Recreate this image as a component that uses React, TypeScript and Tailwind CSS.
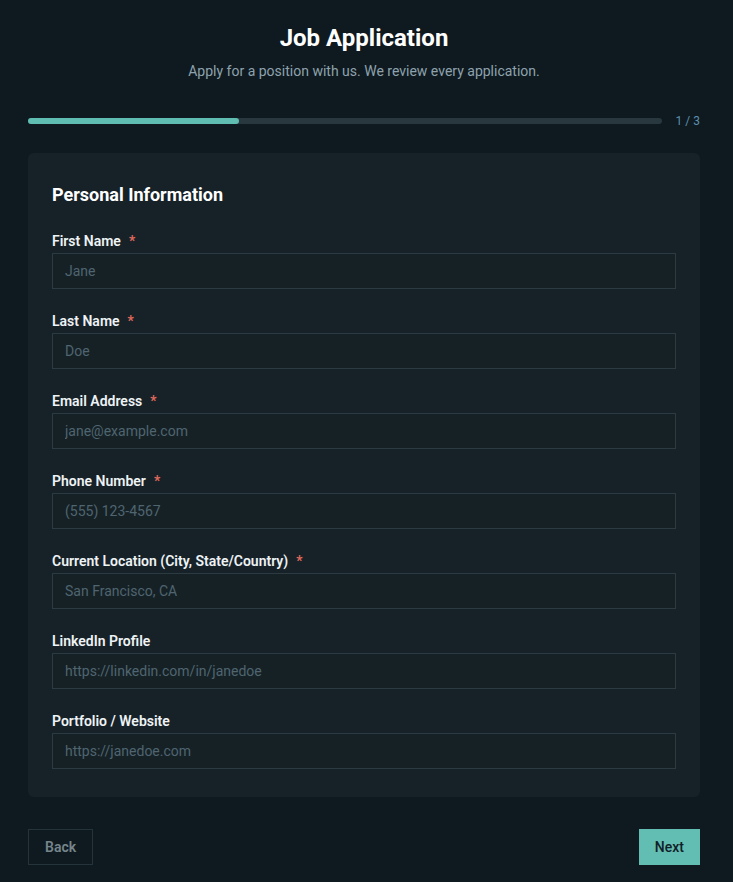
const fields = [
  { label: "First Name", placeholder: "Jane", required: true },
  { label: "Last Name", placeholder: "Doe", required: true },
  { label: "Email Address", placeholder: "jane@example.com", required: true },
  { label: "Phone Number", placeholder: "(555) 123-4567", required: true },
  {
    label: "Current Location (City, State/Country)",
    placeholder: "San Francisco, CA",
    required: true,
  },
  { label: "LinkedIn Profile", placeholder: "https://linkedin.com/in/janedoe", required: false },
  { label: "Portfolio / Website", placeholder: "https://janedoe.com", required: false },
];

export default function App() {
  const step = 1;
  const total = 3;

  return (
    <div className="min-h-screen bg-[#0f1a20] font-['Roboto',sans-serif] text-[#e6edf0]">
      <div className="ml-[28px] w-[672px] pt-[23px] pb-[18px]">
        {/* Header */}
        <header className="text-center">
          <h1 className="text-[24px] leading-[30px] font-bold text-white">Job Application</h1>
          <p className="mt-[8px] text-[14px] leading-5 text-[#8ea2ad]">
            Apply for a position with us. We review every application.
          </p>
        </header>

        {/* Progress */}
        <div className="mt-[32px] flex items-center gap-[13px]">
          <div className="h-[6px] flex-1 rounded-full bg-[#28383e]">
            <div
              className="h-full rounded-full bg-[#5fbdb2]"
              style={{ width: `${(step / total) * 100}%` }}
            />
          </div>
          <span className="w-[25px] text-right text-[12px] leading-4 text-[#5b8fae]">
            {step} / {total}
          </span>
        </div>

        {/* Form card */}
        <section className="mt-[24px] rounded-md bg-[#172228] px-6 pt-[28px] pb-[28px]">
          <h2 className="text-[18px] leading-7 font-bold text-white">Personal Information</h2>
          <form className="mt-[22px] flex flex-col gap-[22px]">
            {fields.map((f) => (
              <div key={f.label} className="flex flex-col gap-[2px]">
                <label className="flex items-center gap-2 text-[14px] leading-5 font-semibold text-[#eef3f5]">
                  {f.label}
                  {f.required && <span className="text-[#e0695c]">*</span>}
                </label>
                <input
                  type="text"
                  placeholder={f.placeholder}
                  className="h-9 w-full border border-[#2c3b42] bg-[#162126] px-3 text-[14px] text-[#e6edf0] outline-none placeholder:text-[#4f6570]"
                />
              </div>
            ))}
          </form>
        </section>

        {/* Navigation */}
        <div className="mt-8 flex items-center justify-between">
          <button className="h-9 border border-[#25343a] px-4 text-[14px] font-semibold text-[#76858c]">
            Back
          </button>
          <button className="h-9 bg-[#62bdb2] px-4 text-[14px] font-medium text-[#112028]">
            Next
          </button>
        </div>
      </div>
    </div>
  );
}
